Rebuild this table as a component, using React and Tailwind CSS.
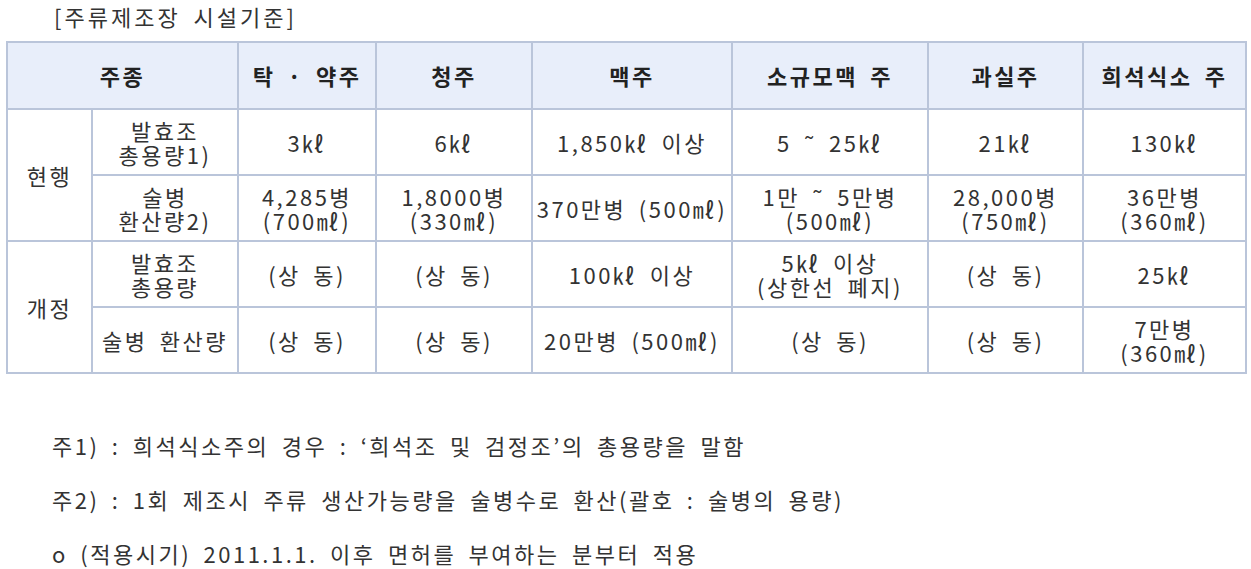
import React from "react";

const font = { fontFamily: '"Noto Sans CJK KR", "Noto Sans", sans-serif' };

const cols = [85, 146, 138, 156, 200, 196, 155, 163];

const headers = ["탁 · 약주", "청주", "맥주", "소규모맥 주", "과실주", "희석식소 주"];

const rows = [
  {
    group: "현행",
    label: ["발효조", "총용량1)"],
    cells: [["3㎘"], ["6㎘"], ["1,850㎘ 이상"], ["5 ˜ 25㎘"], ["21㎘"], ["130㎘"]],
  },
  {
    label: ["술병", "환산량2)"],
    cells: [
      ["4,285병", "(700㎖)"],
      ["1,8000병", "(330㎖)"],
      ["370만병 (500㎖)"],
      ["1만 ˜ 5만병", "(500㎖)"],
      ["28,000병", "(750㎖)"],
      ["36만병", "(360㎖)"],
    ],
  },
  {
    group: "개정",
    label: ["발효조", "총용량"],
    cells: [["(상 동)"], ["(상 동)"], ["100㎘ 이상"], ["5㎘ 이상", "(상한선 폐지)"], ["(상 동)"], ["25㎘"]],
  },
  {
    label: ["술병 환산량"],
    cells: [["(상 동)"], ["(상 동)"], ["20만병 (500㎖)"], ["(상 동)"], ["(상 동)"], ["7만병", "(360㎖)"]],
  },
];

const cellCls = "border-2 border-[#bac5da] text-center align-middle p-0";

function Lines({ lines }) {
  return (
    <div className="flex flex-col items-center leading-[24px]">
      {lines.map((l, i) => (
        <span key={i} className="whitespace-pre">{l}</span>
      ))}
    </div>
  );
}

export default function App() {
  return (
    <div className="bg-white w-[1251px] h-[569px] text-[#333] tracking-[2.5px] [word-spacing:5px]" style={font}>
      <div className="pl-[54px] pt-[1px] h-[41px] text-[22px] leading-[30px] tracking-[3px]">[주류제조장 시설기준]</div>
      <table className="ml-[6px] table-fixed border-collapse text-[22px]" style={{ width: 1239 }}>
        <colgroup>
          {cols.map((w, i) => (
            <col key={i} style={{ width: w }} />
          ))}
        </colgroup>
        <thead>
          <tr className="h-[67px] bg-[#e8eefa] font-bold text-[#222]">
            <th colSpan={2} className={cellCls}>주종</th>
            {headers.map((h) => (
              <th key={h} className={cellCls + " whitespace-pre"}>{h}</th>
            ))}
          </tr>
        </thead>
        <tbody>
          {rows.map((r, ri) => (
            <tr key={ri} className="h-[66px]">
              {r.group && (
                <td rowSpan={2} className={cellCls}>{r.group}</td>
              )}
              <td className={cellCls}>
                <Lines lines={r.label} />
              </td>
              {r.cells.map((c, ci) => (
                <td key={ci} className={cellCls}>
                  <Lines lines={c} />
                </td>
              ))}
            </tr>
          ))}
        </tbody>
      </table>
      <div className="pl-[52px] pt-[56px] text-[22px] leading-[30px] flex flex-col gap-[24px]">
        <p>주1) : 희석식소주의 경우 : ‘희석조 및 검정조’의 총용량을 말함</p>
        <p>주2) : 1회 제조시 주류 생산가능량을 술병수로 환산(괄호 : 술병의 용량)</p>
        <p>o (적용시기) 2011.1.1. 이후 면허를 부여하는 분부터 적용</p>
      </div>
    </div>
  );
}
